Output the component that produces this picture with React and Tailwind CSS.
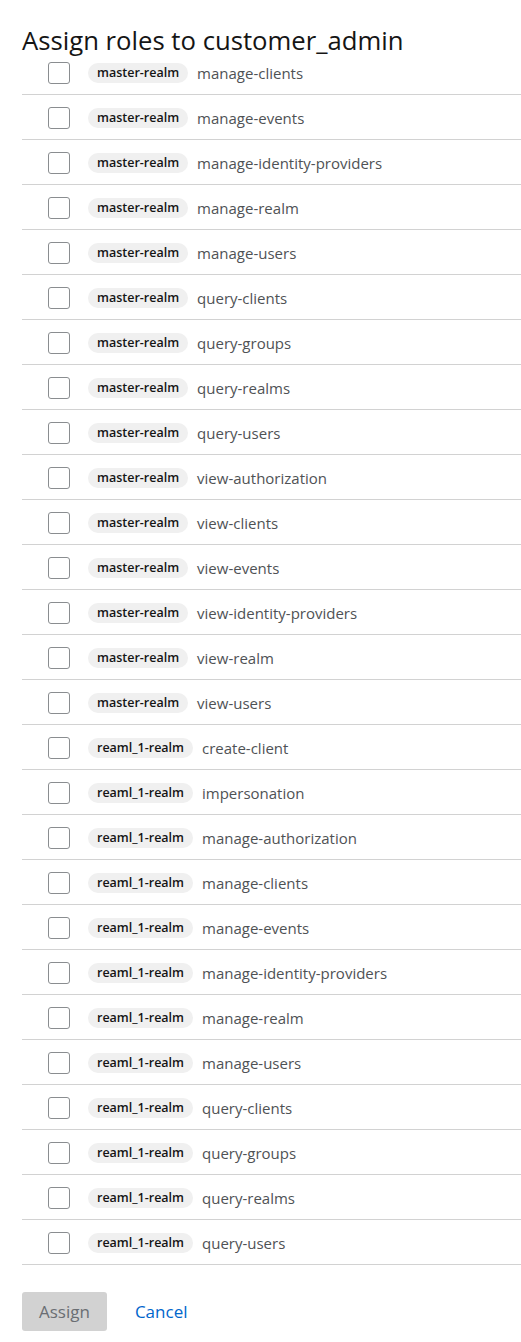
import React from 'react';

const roles = [
  ['master-realm', 'manage-clients'],
  ['master-realm', 'manage-events'],
  ['master-realm', 'manage-identity-providers'],
  ['master-realm', 'manage-realm'],
  ['master-realm', 'manage-users'],
  ['master-realm', 'query-clients'],
  ['master-realm', 'query-groups'],
  ['master-realm', 'query-realms'],
  ['master-realm', 'query-users'],
  ['master-realm', 'view-authorization'],
  ['master-realm', 'view-clients'],
  ['master-realm', 'view-events'],
  ['master-realm', 'view-identity-providers'],
  ['master-realm', 'view-realm'],
  ['master-realm', 'view-users'],
  ['reaml_1-realm', 'create-client'],
  ['reaml_1-realm', 'impersonation'],
  ['reaml_1-realm', 'manage-authorization'],
  ['reaml_1-realm', 'manage-clients'],
  ['reaml_1-realm', 'manage-events'],
  ['reaml_1-realm', 'manage-identity-providers'],
  ['reaml_1-realm', 'manage-realm'],
  ['reaml_1-realm', 'manage-users'],
  ['reaml_1-realm', 'query-clients'],
  ['reaml_1-realm', 'query-groups'],
  ['reaml_1-realm', 'query-realms'],
  ['reaml_1-realm', 'query-users'],
];

const RoleRow = ({ client, name }) => (
  <div className="flex items-center h-[45px] pt-[2px] border-b border-[#d2d2d2] pl-[26px]">
    <span className="w-[22px] h-[22px] rounded-[3px] border border-[#8a8d90] bg-white shrink-0" />
    <span className="ml-[18px] h-[20px] px-[9px] rounded-full bg-[#f0f0f0] text-[12.5px] font-semibold text-[#151515] leading-[20px]">
      {client}
    </span>
    <span className="ml-[9px] text-[15px] text-[#4f5255]">{name}</span>
  </div>
);

export default function App() {
  return (
    <div className="bg-white min-h-screen font-['Open_Sans',sans-serif]">
      <h1 className="pl-[22px] pt-[26px] h-[50px] text-[25.7px] leading-[30px] text-[#151515]">
        Assign roles to customer_admin
      </h1>
      <div className="ml-[22px]">
        {roles.map(([c, n], i) => (
          <RoleRow key={i} client={c} name={n} />
        ))}
      </div>
      <div className="flex items-center px-[22px] pt-[27px] gap-[28px]">
        <button className="h-[39px] px-[17px] rounded-[3px] bg-[#d2d2d2] text-[17px] text-[#6a6e73]">
          Assign
        </button>
        <button className="text-[17px] text-[#0066cc]">Cancel</button>
      </div>
    </div>
  );
}
